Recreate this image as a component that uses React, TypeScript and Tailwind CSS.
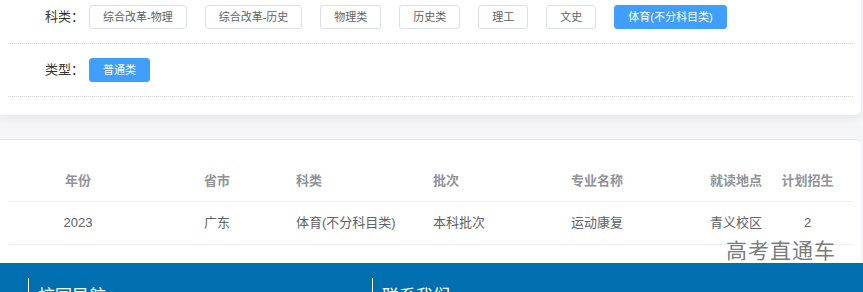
import React from 'react';

const subjects = ['综合改革-物理', '综合改革-历史', '物理类', '历史类', '理工', '文史', '体育(不分科目类)'];
const activeSubject = '体育(不分科目类)';

const columns = [
  { title: '年份', width: 'w-[140px]', align: 'text-center' },
  { title: '省市', width: 'w-[138px]', align: 'text-center' },
  { title: '科类', width: 'w-[137px]', align: 'text-left pl-[10px]' },
  { title: '批次', width: 'w-[138px]', align: 'text-left pl-[10px]' },
  { title: '专业名称', width: 'w-[139px]', align: 'text-left pl-[10px]' },
  { title: '就读地点', width: 'w-[72px]', align: 'text-left pl-[10px]' },
  { title: '计划招生', width: 'w-[71px]', align: 'text-center' },
];

const rows = [['2023', '广东', '体育(不分科目类)', '本科批次', '运动康复', '青义校区', '2']];

function FilterButton({ label, active }: { label: string; active?: boolean }) {
  return (
    <button
      className={`h-[24px] px-[13px] mr-[18px] rounded-[3px] border text-[11px] leading-none ${
        active ? 'bg-[#409eff] border-[#409eff] text-white' : 'bg-white border-[#dcdfe6] text-[#606266]'
      }`}
    >
      {label}
    </button>
  );
}

export default function App() {
  return (
    <div
      className="relative w-[863px] h-[292px] overflow-hidden bg-[#f4f5f8]"
      style={{ fontFamily: '"Liberation Sans", "Noto Sans CJK SC", sans-serif' }}
    >
      {/* filter card */}
      <div className="mr-[2px] -mt-[9px] bg-white rounded-br-md shadow-[0_2px_8px_rgba(0,0,0,0.08)] px-[8px] pb-[18px]">
        <div className="flex items-center h-[53px] border-b border-dotted border-[#d4d4d4]">
          <span className="w-[76px] text-right text-[13px] text-[#333]">科类：</span>
          <div className="ml-[5px] flex items-center">
            {subjects.map((s) => (
              <FilterButton key={s} label={s} active={s === activeSubject} />
            ))}
          </div>
        </div>
        <div className="flex items-center h-[53px] border-b border-dotted border-[#d4d4d4]">
          <span className="w-[76px] text-right text-[13px] text-[#333]">类型：</span>
          <div className="ml-[5px] flex items-center">
            <FilterButton label="普通类" active />
          </div>
        </div>
      </div>

      {/* table card */}
      <div className="mt-[24px] mr-[2px] h-[140px] bg-white border-t border-[#e4e7ef] rounded-tr-md px-[8px] pt-[20px]">
        <div className="flex h-[42px] items-center border-b border-[#ebeef5] text-[13px] font-bold text-[#909399]">
          {columns.map((c) => (
            <div key={c.title} className={`${c.width} ${c.align} shrink-0 whitespace-nowrap`}>
              {c.title}
            </div>
          ))}
        </div>
        {rows.map((r, i) => (
          <div key={i} className="flex h-[43px] items-center border-b border-[#ebeef5] text-[13px] text-[#606266]">
            {r.map((cell, j) => (
              <div key={j} className={`${columns[j].width} ${columns[j].align} shrink-0 whitespace-nowrap`}>
                {cell}
              </div>
            ))}
          </div>
        ))}
      </div>

      {/* footer */}
      <div className="absolute left-0 right-0 top-[263px] h-[60px] bg-[#006fb0] flex pt-[15px] pl-[28px]">
        <div className="w-[344px] border-l border-white pl-[9px] pt-[6px] text-white text-[17px] leading-[26px]">校园导航</div>
        <div className="border-l border-white pl-[9px] pt-[6px] text-white text-[17px] leading-[26px]">联系我们</div>
      </div>

      {/* watermark */}
      <div className="absolute left-[726px] top-[240px] text-[21px] tracking-[1px] text-[#6a6a6a]/90 leading-none pointer-events-none">
        高考直通车
      </div>
    </div>
  );
}
